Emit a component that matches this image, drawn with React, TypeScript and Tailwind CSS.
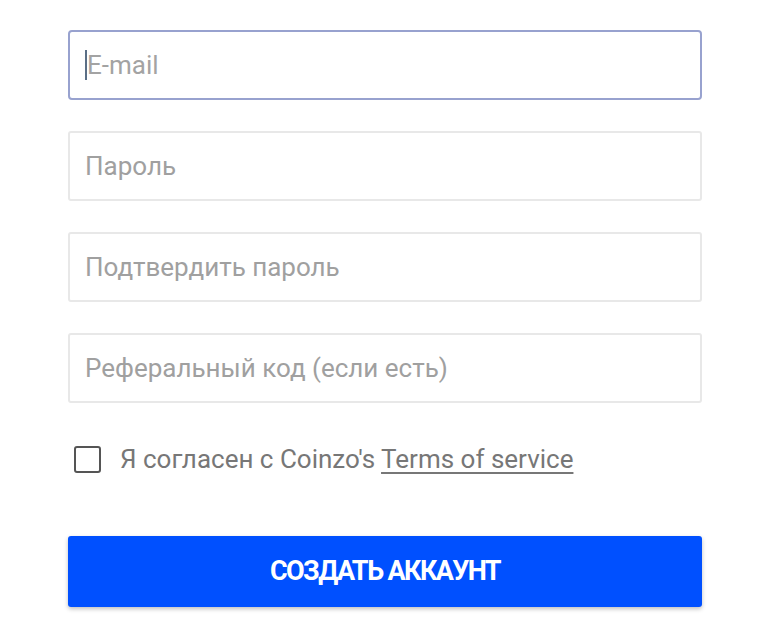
import { useState } from 'react'

const fields = ['Пароль', 'Подтвердить пароль', 'Реферальный код (если есть)']

export default function App() {
  const [agree, setAgree] = useState(false)

  return (
    <div className="min-h-[630px] w-[770px] bg-white font-['Roboto','Liberation_Sans',sans-serif]">
      <form className="ml-[68px] flex w-[634px] flex-col pt-[30px]">
        <div className="flex h-[70px] items-center rounded-[4px] border-2 border-[#98a2cf] px-[15px]">
          <span className="h-[30px] w-[2px] bg-[#5b6f86]" />
          <span className="text-[26px] text-[#a3a3a3]">E-mail</span>
        </div>
        {fields.map((f) => (
          <div
            key={f}
            className="mt-[31px] flex h-[70px] items-center rounded-[3px] border-2 border-[#e8e8e8] px-[15px] text-[26px] text-[#a0a0a0]"
          >
            {f}
          </div>
        ))}
        <label className="mt-[37px] flex items-center gap-[19px] pl-[6px] text-[26px] text-[#777]">
          <button
            type="button"
            onClick={() => setAgree(!agree)}
            className="h-[27px] w-[27px] rounded-[3px] border-2 border-[#555]"
          />
          <span>
            Я согласен с Coinzo's <span className="underline underline-offset-[4px]">Terms of service</span>
          </span>
        </label>
        <button
          type="button"
          className="mt-[57px] flex h-[71px] items-center justify-center rounded-[3px] bg-[#0050ff] text-[27px] font-bold tracking-[-1.6px] text-white shadow-[0_2px_4px_rgba(0,0,0,0.25)]"
        >
          СОЗДАТЬ АККАУНТ
        </button>
      </form>
    </div>
  )
}
